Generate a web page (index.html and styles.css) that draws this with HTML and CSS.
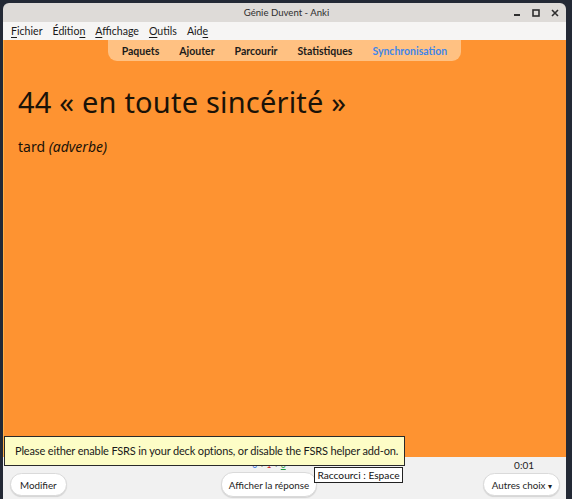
FILE: index.html
```html
<!DOCTYPE html>
<html lang="fr">
<head>
<meta charset="utf-8">
<title>Génie Duvent - Anki</title>
<link rel="stylesheet" href="styles.css">
</head>
<body>
<div class="window">
  <div class="titlebar">
    <span class="title">Génie Duvent - Anki</span>
    <div class="wm-buttons">
      <svg width="8" height="8" viewBox="0 0 8 8"><rect x="1" y="5" width="6" height="2" fill="#2e2e2e"/></svg>
      <svg width="8" height="8" viewBox="0 0 8 8"><rect x="1" y="1" width="6" height="6" fill="none" stroke="#2e2e2e" stroke-width="1.6"/></svg>
      <svg width="8" height="8" viewBox="0 0 8 8"><path d="M1 1L7 7M7 1L1 7" stroke="#2e2e2e" stroke-width="1.6"/></svg>
    </div>
  </div>
  <div class="menubar">
    <span class="menu"><u>F</u>ichier</span>
    <span class="menu">Éditio<u>n</u></span>
    <span class="menu"><u>A</u>ffichage</span>
    <span class="menu"><u>O</u>utils</span>
    <span class="menu">Aid<u>e</u></span>
  </div>
  <div class="webview">
    <nav class="toolbar">
      <span class="tb-item">Paquets</span>
      <span class="tb-item">Ajouter</span>
      <span class="tb-item">Parcourir</span>
      <span class="tb-item">Statistiques</span>
      <span class="tb-item sync">Synchronisation</span>
    </nav>
    <div class="card">
      <h1 class="front">44 « en toute sincérité »</h1>
      <p class="back">tard <i>(adverbe)</i></p>
    </div>
  </div>
  <div class="bottombar">
    <div class="bb-left">
      <button class="btn">Modifier</button>
    </div>
    <div class="bb-middle">
      <div class="counts"><span class="c-new">0</span> + <span class="c-lrn">1</span> + <span class="c-rev">0</span></div>
      <button class="btn btn-answer">Afficher la réponse</button>
    </div>
    <div class="bb-right">
      <div class="timer">0:01</div>
      <button class="btn btn-more">Autres choix <span class="caret">▾</span></button>
    </div>
  </div>
  <div class="tip-fsrs">Please either enable FSRS in your deck options, or disable the FSRS helper add-on.</div>
  <div class="tip-key">Raccourci : Espace</div>
</div>
</body>
</html>
```

FILE: styles.css
```css
html, body {
  margin: 0;
  padding: 0;
  height: 100%;
  overflow: hidden;
}
body {
  background: #232935;
  font-family: Lato, "Noto Sans", sans-serif;
}
.window {
  position: relative;
  margin: 3px 0 0 3px;
  width: 563px;
  height: 496px;
  display: flex;
  flex-direction: column;
  border-radius: 6px 6px 0 0;
  overflow: hidden;
}
.titlebar {
  height: 19px;
  background: #dedbd8;
  display: flex;
  align-items: center;
  justify-content: center;
  position: relative;
  flex: none;
}
.title {
  font-size: 9.6px;
  color: #2e2e2e;
  margin-left: 4px;
}
.wm-buttons {
  position: absolute;
  right: 7px;
  top: 6px;
  display: flex;
  gap: 11px;
}
.wm-buttons svg { display: block; }
.menubar {
  height: 18px;
  background: #f6f5f4;
  display: flex;
  align-items: center;
  padding-left: 8px;
  gap: 10px;
  flex: none;
  font-size: 10.6px;
  color: #1a1a1a;
}
.menu u { text-decoration-thickness: 1px; text-underline-offset: 2px; }
.webview {
  flex: 1;
  background: #fe9331;
  border-left: 1px solid #ffb24a;
  display: flex;
  flex-direction: column;
  min-height: 0;
}
.toolbar {
  align-self: center;
  margin-left: -1px;
  display: flex;
  gap: 20px;
  padding: 4px 14px 3px 14px;
  background: #ffc182;
  border-radius: 0 0 9px 9px;
  font-size: 10.5px;
  font-weight: bold;
  color: #1b1b1b;
  line-height: 14px;
}
.tb-item.sync { color: #3f86e8; }
.card {
  padding: 0 0 0 14px;
  color: #1a1208;
}
.front {
  margin: 21px 0 0 0;
  font-family: "Noto Sans", sans-serif;
  font-weight: normal;
  font-size: 29px;
  line-height: 40px;
  letter-spacing: 0.2px;
}
.back {
  margin: 15px 0 0 0;
  font-family: "Noto Sans", sans-serif;
  font-size: 14px;
  line-height: 20px;
}
.bottombar {
  height: 42px;
  flex: none;
  background: #f1f1f1;
  display: flex;
  align-items: flex-end;
  padding: 0 6px 3px 7px;
  box-sizing: border-box;
}
.bb-left { flex: 1; display: flex; align-items: flex-end; }
.bb-middle { display: flex; flex-direction: column; align-items: center; margin-right: 32px; }
.bb-right { flex: 1; display: flex; flex-direction: column; align-items: flex-end; }
.btn {
  font-family: Lato, "Noto Sans", sans-serif;
  font-size: 9.8px;
  color: #1e1e1e;
  background: #ffffff;
  border: 1px solid #dadada;
  border-radius: 12px;
  height: 23px;
  padding: 0 9px;
  box-shadow: 0 1px 1px rgba(0,0,0,0.12);
  white-space: nowrap;
}
.btn-answer { height: 25px; padding: 0 7px; margin-bottom: -1px; }
.btn-more { padding: 0 7px 0 8px; }
.caret { font-size: 8px; }
.counts {
  font-size: 8.5px;
  color: #555;
  line-height: 11px;
  margin-bottom: 1px;
  white-space: nowrap;
}
.c-new { color: #2d6fe0; }
.c-lrn { color: #cc2222; }
.c-rev { color: #1a9a3a; text-decoration: underline; }
.timer {
  font-size: 10px;
  color: #1e1e1e;
  margin: 0 26px 1px 0;
  line-height: 14px;
}
.tip-fsrs {
  position: absolute;
  left: 1px;
  top: 433px;
  width: 401px;
  height: 30px;
  box-sizing: border-box;
  border: 1px solid #2a2a2a;
  background: #fdfdc6;
  font-size: 11px;
  letter-spacing: -0.15px;
  color: #1a1a1a;
  line-height: 28px;
  padding-left: 10px;
  white-space: nowrap;
}
.tip-key {
  position: absolute;
  left: 311px;
  top: 464px;
  width: 89px;
  height: 16px;
  box-sizing: border-box;
  border: 1px solid #222;
  background: #ffffff;
  font-size: 10.2px;
  color: #111;
  line-height: 14px;
  text-align: center;
  white-space: nowrap;
}
```
